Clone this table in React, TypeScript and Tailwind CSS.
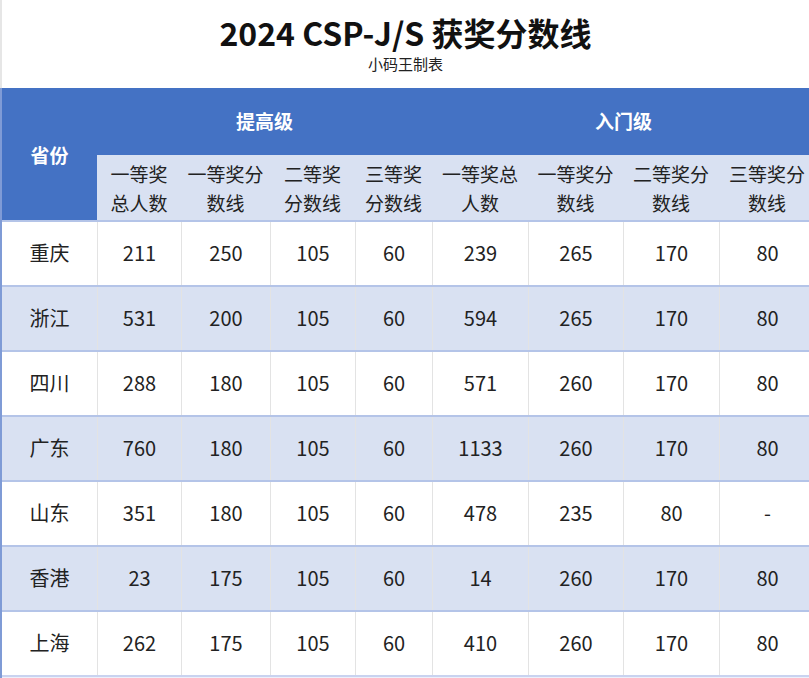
const rows: string[][] = [
  ['重庆', '211', '250', '105', '60', '239', '265', '170', '80'],
  ['浙江', '531', '200', '105', '60', '594', '265', '170', '80'],
  ['四川', '288', '180', '105', '60', '571', '260', '170', '80'],
  ['广东', '760', '180', '105', '60', '1133', '260', '170', '80'],
  ['山东', '351', '180', '105', '60', '478', '235', '80', '-'],
  ['香港', '23', '175', '105', '60', '14', '260', '170', '80'],
  ['上海', '262', '175', '105', '60', '410', '260', '170', '80'],
]

const subHeads: [string, string][] = [
  ['一等奖', '总人数'],
  ['一等奖分', '数线'],
  ['二等奖', '分数线'],
  ['三等奖', '分数线'],
  ['一等奖总', '人数'],
  ['一等奖分', '数线'],
  ['二等奖分', '数线'],
  ['三等奖分', '数线'],
]

const cols = 'grid grid-cols-[95px_84px_89px_85px_77px_96px_95px_96px_96px]'

export default function App() {
  return (
    <div
      className="w-[809px] h-[678px] overflow-hidden bg-white"
      style={{ fontFamily: '"Noto Sans CJK SC", "Noto Sans", sans-serif' }}
    >
      {/* Title */}
      <div className="h-[88px] flex flex-col items-center border-l-2 border-[#e6e6e6]">
        <h1 className="mt-[11px] text-[32px] leading-[42px] font-bold text-[#111]">2024 CSP-J/S 获奖分数线</h1>
        <p className="mt-0 text-[15px] leading-[22px] text-[#222]">小码王制表</p>
      </div>

      <div className="w-[815px] border-l-2 border-[#7f9bd6]">
        {/* Header */}
        <div className={`${cols} grid-rows-[67px_65px] bg-[#4472c4]`}>
          <div className="row-span-2 flex items-center justify-center pt-[2px] text-[19px] font-bold text-white">省份</div>
          <div className="col-span-4 flex items-center justify-center text-[19px] font-bold text-white">提高级</div>
          <div className="col-span-4 flex items-center justify-center text-[19px] font-bold text-white">入门级</div>
          {subHeads.map(([a, b], i) => (
            <div
              key={i}
              className="bg-[#d9e1f2] flex flex-col items-center justify-center text-[19px] leading-[29px] text-[#222]"
            >
              <span>{a}</span>
              <span>{b}</span>
            </div>
          ))}
        </div>

        {/* Body */}
        {rows.map((r, i) => (
          <div
            key={r[0]}
            className={`${cols} h-[65px] border-t-2 border-[#b4c4e8] ${i % 2 === 1 ? 'bg-[#d9e1f2]' : 'bg-white'}`}
          >
            {r.map((c, j) => (
              <div
                key={j}
                className={`flex items-center justify-center pb-[2px] text-[20px] text-[#222] ${j > 0 ? 'border-l border-[#e3e3e3]' : ''}`}
              >
                {c}
              </div>
            ))}
          </div>
        ))}
        <div className="h-[4px] border-t-2 border-[#c9d3f0] bg-[#eef0fb]" />
      </div>
    </div>
  )
}
